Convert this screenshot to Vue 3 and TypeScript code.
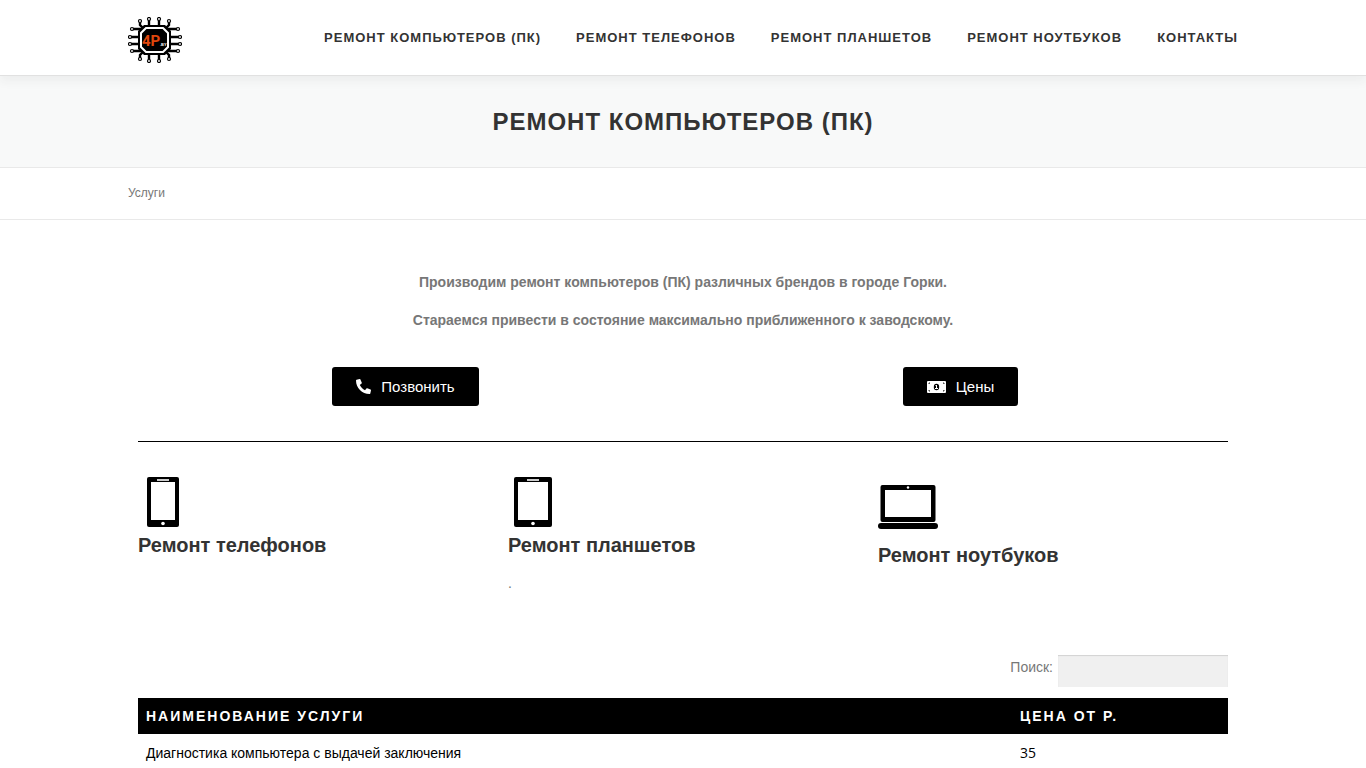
<script setup lang="ts">
import { ref } from 'vue'

interface Service {
  name: string
  price: number
}

const menu: string[] = [
  'Ремонт компьютеров (ПК)',
  'Ремонт телефонов',
  'Ремонт планшетов',
  'Ремонт ноутбуков',
  'Контакты',
]
const services: Service[] = [{ name: 'Диагностика компьютера с выдачей заключения', price: 35 }]
const query = ref('')
const topPins: [number, number][] = [[12, 4], [21, 2], [31, 2], [41, 4]]
const sidePins: [number, number][] = [[4, 12], [2, 20], [2, 27], [4, 34]]
</script>

<template>
  <div class="page">
    <header class="header">
      <div class="container header-row">
        <a href="#" class="logo" aria-label="4P.by">
          <svg width="54" height="46" viewBox="0 0 54 46">
            <g fill="none" stroke="#000" stroke-width="2.4">
              <path d="M12 5V8L16 12V34L12 38V41M21 3V43M31 3V43M41 5V8L37 12V34L41 38V41" />
              <path d="M5 12H16M3 20H51M3 27H51M5 34H16M37 12H49M37 34H49" />
            </g>
            <g fill="#fff" stroke="#000" stroke-width="1.2">
              <template v-for="[x, y] in topPins" :key="x">
                <circle :cx="x" :cy="y" r="1.5" />
                <circle :cx="x" :cy="46 - y" r="1.5" />
              </template>
              <template v-for="[x, y] in sidePins" :key="y">
                <circle :cx="x" :cy="y" r="1.5" />
                <circle :cx="54 - x" :cy="y" r="1.5" />
              </template>
            </g>
            <path d="M16 8H37L43 14V32L37 38H16L10 32V14Z" />
            <path d="M18 11H35L40 16V30L35 35H18L13 30V16Z" stroke="#fff" stroke-width="2" />
            <text x="14" y="29" class="logo-main">4P</text>
            <text x="32" y="29" class="logo-sub">.BY</text>
          </svg>
        </a>
        <nav class="nav">
          <a v-for="item in menu" :key="item" href="#">{{ item }}</a>
        </nav>
      </div>
    </header>

    <div class="title-band"><h1>Ремонт компьютеров (ПК)</h1></div>
    <div class="crumbs"><div class="container">Услуги</div></div>

    <main class="content">
      <div class="intro">
        <p>Производим ремонт компьютеров (ПК) различных брендов в городе Горки.</p>
        <p>Стараемся привести в состояние максимально приближенного к заводскому.</p>
      </div>
      <div class="actions">
        <div>
          <a href="#" class="button">
            <svg width="15" height="15" viewBox="0 0 512 512" fill="#fff"><path d="M493 25 389 1c-11-3-23 3-27 14l-48 112c-4 10-1 21 7 28l61 50c-36 76-99 140-177 177l-50-61c-7-8-18-11-28-7L15 362C4 367-2 378 1 389l24 104c3 11 12 19 24 19 256 0 463-207 463-464 0-11-8-21-19-23z" transform="matrix(-1 0 0 1 512 0)" /></svg>
            Позвонить
          </a>
        </div>
        <div>
          <a href="#" class="button">
            <svg width="19" height="12" viewBox="0 0 19 12"><rect width="19" height="12" rx="1" fill="#fff" /><ellipse cx="9.5" cy="6" rx="2.7" ry="3.3" /><path d="M9 4h1v3h1v1H8V7h1V5H8z" fill="#fff" /><path d="M1.500 2.500h1v-1M16.500 1.500v1h1M1.500 9.500h1v1M16.500 10.500v-1h1" fill="none" stroke="#000" stroke-width=".8" /></svg>
            Цены
          </a>
        </div>
      </div>
      <hr />
      <section class="cards">
        <article>
          <svg width="50" height="50" viewBox="0 0 50 50"><rect x="9" width="32" height="50" rx="2" /><path fill="#fff" d="M13 5h24v38H13z" /><path fill="#ccc" d="M19 2h12v2H19z" /><circle cx="25" cy="46.500" r="1.800" fill="#fff" /></svg>
          <h2>Ремонт телефонов</h2>
        </article>
        <article>
          <svg width="50" height="50" viewBox="0 0 50 50"><rect x="6" width="38" height="50" rx="2" /><path fill="#fff" d="M10 5h30v38H10z" /><path fill="#ccc" d="M19 2h12v2H19z" /><circle cx="25" cy="46.500" r="1.800" fill="#fff" /></svg>
          <h2>Ремонт планшетов</h2>
          <p>.</p>
        </article>
        <article>
          <svg width="60" height="60" viewBox="0 0 60 60"><rect x="2.500" y="8" width="55" height="37" rx="2" /><path fill="#fff" d="M7 13h46v27H7z" /><circle cx="30" cy="10.500" r="1.200" fill="#fff" /><rect y="46" width="60" height="6" rx="3" /></svg>
          <h2>Ремонт ноутбуков</h2>
        </article>
      </section>
      <div class="search">
        <label for="search">Поиск:</label>
        <input id="search" v-model="query" type="search" />
      </div>
      <table>
        <thead>
          <tr><th scope="col">Наименование услуги</th><th scope="col" class="price">Цена от р.</th></tr>
        </thead>
        <tbody>
          <tr v-for="s in services" :key="s.name"><td>{{ s.name }}</td><td>{{ s.price }}</td></tr>
        </tbody>
      </table>
    </main>
  </div>
</template>

<style>
body {
  margin: 0;
  background: #fff;
}
html {
  overflow: hidden;
}
</style>

<style scoped>
.page {
  font: 14px/24px "Liberation Sans", Arial, sans-serif;
  color: #777;
}
a {
  color: inherit;
  text-decoration: none;
}
svg {
  display: block;
}
.container {
  max-width: 1110px;
  margin: 0 auto;
}
.header {
  position: relative;
  background: #fff;
  border-bottom: 1px solid #e1e1e1;
  box-shadow: 0 5px 10px rgba(50, 50, 50, 0.06);
}
.header-row {
  display: flex;
  align-items: center;
  justify-content: space-between;
  height: 75px;
}
.logo {
  padding-top: 4px;
}
.logo-main {
  font: bold 15px "Roboto", sans-serif;
  fill: #e2470d;
}
.logo-sub {
  font: bold 4px/4px "Liberation Sans", sans-serif;
  fill: #fff;
}
.nav {
  display: flex;
  gap: 35px;
  font-size: 13px;
  font-weight: 700;
  letter-spacing: 1px;
  text-transform: uppercase;
  color: #333;
}
.title-band {
  padding: 28px 0 27px;
  background: #f8f9f9;
  border-bottom: 1px solid #e9e9e9;
  text-align: center;
}
h1 {
  margin: 0;
  font-size: 24px;
  line-height: 36px;
  letter-spacing: 1px;
  text-transform: uppercase;
  color: #333;
}
.crumbs {
  padding: 13px 0 14px;
  border-bottom: 1px solid #e9e9e9;
  font-size: 12px;
}
.content {
  max-width: 1090px;
  margin: 0 auto;
  padding-top: 50px;
}
.intro {
  text-align: center;
  font-weight: 700;
}
.intro p {
  margin: 0 0 14px;
}
.actions {
  display: grid;
  grid-template-columns: 1fr 1fr;
  gap: 20px;
  justify-items: center;
  padding: 21px 0 35px;
}
.button {
  display: flex;
  align-items: center;
  gap: 10px;
  height: 39px;
  padding: 0 24px;
  border-radius: 3px;
  background: #000;
  color: #fff;
  font-size: 15px;
}
hr {
  margin: 0 0 35px;
  border: 0;
  border-top: 1px solid #000;
}
.cards {
  display: grid;
  grid-template-columns: repeat(3, 1fr);
  gap: 20px;
  height: 178px;
}
.cards h2 {
  margin: 3px 0 11px;
  font-size: 20px;
  line-height: 30px;
  color: #333;
}
.cards p {
  margin: 0;
}
.search {
  display: flex;
  justify-content: flex-end;
  gap: 5px;
  margin-bottom: 11px;
}
.search input {
  box-sizing: border-box;
  width: 170px;
  height: 32px;
  padding: 0 10px;
  border: 0;
  border-radius: 0;
  background: #f0f0f0;
  box-shadow: inset 0 1px 1px rgba(0, 0, 0, 0.125);
}
table {
  width: 100%;
  border-collapse: collapse;
  table-layout: fixed;
  color: #000;
}
th,
td {
  padding: 6px 8px;
  text-align: left;
}
th {
  background: #000;
  color: #fff;
  font-size: 14px;
  letter-spacing: 2px;
  text-transform: uppercase;
}
.price {
  width: 200px;
}
tbody td {
  padding-top: 7px;
}
td:last-child {
  font-family: "Open Sans", sans-serif;
}
</style>
